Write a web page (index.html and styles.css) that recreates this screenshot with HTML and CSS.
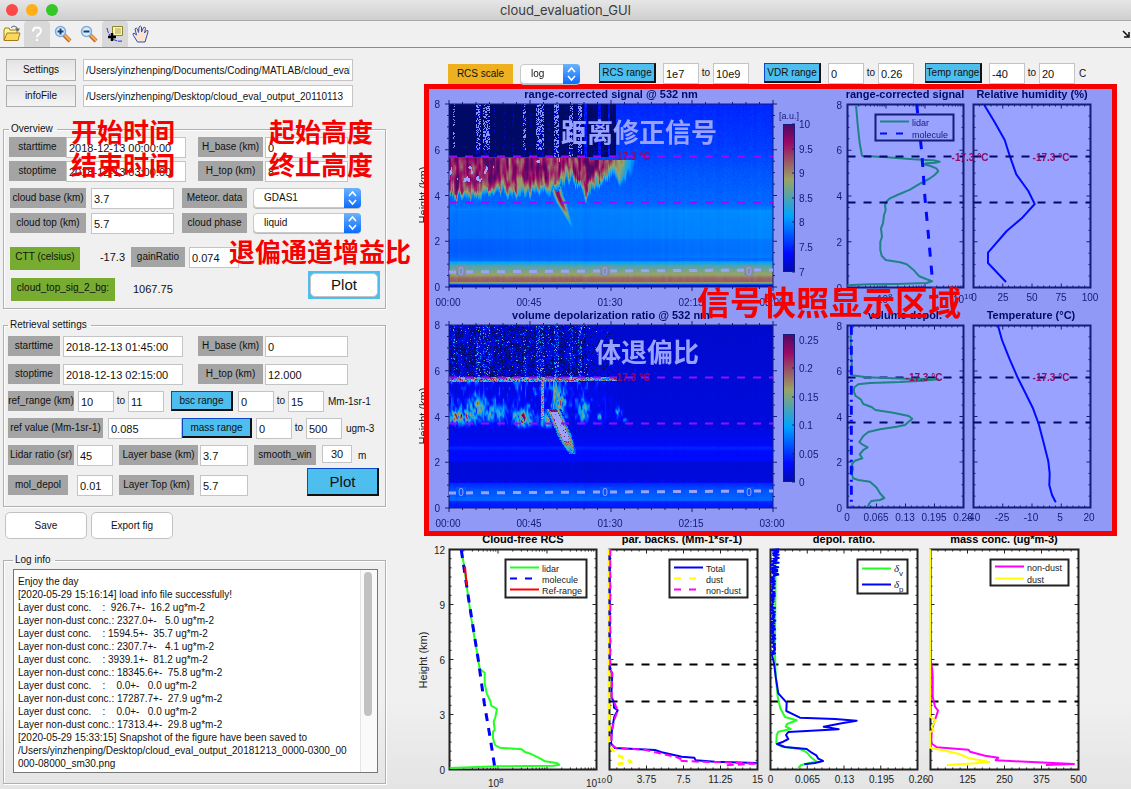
FILE: index.html
```html
<!DOCTYPE html>
<html lang="en">
<head>
<meta charset="utf-8">
<title>cloud_evaluation_GUI</title>
<link rel="stylesheet" href="styles.css">
</head>
<body>
<header class="titlebar">
  <div class="lights"><i class="light light-close"></i><i class="light light-min"></i><i class="light light-max"></i></div>
  <h1 class="window-title">cloud_evaluation_GUI</h1>
</header>
<nav class="toolbar" aria-label="Figure tools">
  <button class="tool" aria-label="Open"><svg width="20" height="20" viewBox="0 0 20 20"><path d="M2 16V6l1-2h4l1 2h7v3" fill="#fff2a0" stroke="#a67c10"/><path d="M2 16.500 5 9h13l-2 7.500z" fill="#f8d860" stroke="#a67c10"/><path d="M9 3.500q3-3 6 0v2.500" fill="none" stroke="#53657a"/><path d="M13 4.500h5l-2 3z" fill="#53657a"/></svg></button>
  <button class="tool tool-on" aria-label="Help"><svg width="20" height="20" viewBox="0 0 20 20"><path d="M6 7.500q0-4 4-4t4 3.500q0 2-2 3.200t-2 3" fill="none" stroke="#fff" stroke-width="2"/><path d="M9 15h2v2H9z" fill="#fff"/></svg></button>
  <button class="tool" aria-label="Zoom in"><svg width="20" height="20" viewBox="0 0 20 20"><path d="m11 11 6 6" stroke="#b9672c" stroke-width="4"/><path d="m11.500 11 5.500 5.500" stroke="#ffb347" stroke-width="2"/><circle cx="7.500" cy="7.500" r="5" fill="#d5f0fa" stroke="#86a7d8" stroke-width="1.500"/><path d="M4.500 7.500h6m-3-3v6" stroke="#0c3f80" stroke-width="2"/></svg></button>
  <button class="tool" aria-label="Zoom out"><svg width="20" height="20" viewBox="0 0 20 20"><path d="m11 11 6 6" stroke="#b9672c" stroke-width="4"/><path d="m11.500 11 5.500 5.500" stroke="#ffb347" stroke-width="2"/><circle cx="7.500" cy="7.500" r="5" fill="#d5f0fa" stroke="#86a7d8" stroke-width="1.500"/><path d="M4.500 7.500h6" stroke="#0c3f80" stroke-width="2"/></svg></button>
  <button class="tool tool-on" aria-label="Data cursor"><svg width="20" height="20" viewBox="0 0 20 20"><path d="M2 4q1 6 5 10t10 3" fill="none" stroke="#22f" stroke-dasharray="5 1"/><path d="M7.500 2.500h10v9h-10z" fill="#fbf7b0" stroke="#8a8430"/><path d="M10 5h6m-6 2h6m-6 2h6" stroke="#a9a45c"/><path d="M3 13h8m-4-4v8" stroke="#000" stroke-width="2.500"/></svg></button>
  <button class="tool" aria-label="Pan"><svg width="20" height="20" viewBox="0 0 20 20"><path d="M6.500 18 2.500 11.500q-1.500-2 .5-2.500l2.500 2L4 5q1-2 2.500 0l1 3.500L8 3q1.500-2 2.500 0v5l2-4.500q2-1 2 1L13.500 9l2-2.500q2-.5 1.500 1.500L14 18z" fill="#fde3cd" stroke="#2f4fb5" stroke-width="1"/></svg></button>
  <svg class="dock-arrow" width="8" height="8" viewBox="0 0 8 8"><path d="m1 1 5 5M7 2v5H2" stroke="#111" stroke-width="1.500" fill="none"/></svg>
</nav>

<main class="workspace">
  <section class="panel">
    <div class="files">
      <div class="row"><button class="btn-flat">Settings</button><input class="path" aria-label="Settings path" value="/Users/yinzhenping/Documents/Coding/MATLAB/cloud_eval"></div>
      <div class="row"><button class="btn-flat">infoFile</button><input class="path" aria-label="Info file path" value="/Users/yinzhenping/Desktop/cloud_eval_output_20110113"></div>
    </div>

    <fieldset class="group overview">
      <legend>Overview</legend>
      <div class="row"><label class="tag w-tag-m" for="o1">starttime</label><input class="w-date" id="o1" value="2018-12-13 00:00:00"><label class="tag w-tag-l gap-12" for="o2">H_base (km)</label><input class="w-num gap-s" id="o2" value="0"></div>
      <div class="row row-tight"><label class="tag w-tag-m" for="o3">stoptime</label><input class="w-date" id="o3" value="2018-12-13 03:00:00"><label class="tag w-tag-l gap-12" for="o4">H_top (km)</label><input class="w-num gap-s" id="o4" value="8"></div>
      <div class="row row-cloud"><label class="tag w-tag-xl" for="o5">cloud base (km)</label><input class="w-num gap-m" id="o5" value="3.7"><label class="tag w-tag-l gap-8" for="o6">Meteor. data</label><span class="select gap-6"><select id="o6"><option>GDAS1</option></select><svg class="steps" viewBox="0 0 17 20"><path d="m5 8 3.500-4L12 8M5 12l3.500 4L12 12"/></svg></span></div>
      <div class="row row-phase"><label class="tag w-tag-xl" for="o7">cloud top (km)</label><input class="w-num gap-m" id="o7" value="5.7"><label class="tag w-tag-l gap-8" for="o8">cloud phase</label><span class="select gap-6"><select id="o8"><option>liquid</option></select><svg class="steps" viewBox="0 0 17 20"><path d="m5 8 3.500-4L12 8M5 12l3.500 4L12 12"/></svg></span></div>
      <div class="row row-ctt"><span class="tag green w-70">CTT (celsius)</span><output class="out w-ctt">-17.3</output><label class="tag w-54 gap-6" for="o9">gainRatio</label><input class="w-50 gap-4" id="o9" value="0.074"></div>
      <div class="row row-sig"><span class="tag green w-sig">cloud_top_sig_2_bg:</span><output class="out">1067.75</output><span class="plot-well"><button class="btn-round plot">Plot</button></span></div>
      <span class="note note-a">开始时间</span><span class="note note-b">起始高度</span>
      <span class="note note-c">结束时间</span><span class="note note-d">终止高度</span>
      <span class="note note-e">退偏通道增益比</span>
    </fieldset>

    <fieldset class="group retrieval">
      <legend>Retrieval settings</legend>
      <div class="row row-r"><label class="tag w-52" for="r1">starttime</label><input class="w-date gap-3" id="r1" value="2018-12-13 01:45:00"><label class="tag w-tag-l gap-14" for="r2">H_base (km)</label><input class="w-num gap-s" id="r2" value="0"></div>
      <div class="row row-r"><label class="tag w-52" for="r3">stoptime</label><input class="w-date gap-3" id="r3" value="2018-12-13 02:15:00"><label class="tag w-tag-l gap-14" for="r4">H_top (km)</label><input class="w-num gap-s" id="r4" value="12.000"></div>
      <div class="row row-r"><label class="tag w-66" for="r5">ref_range (km)</label><input class="w-36 gap-4" id="r5" value="10"><label class="to" for="r6">to</label><input class="w-36" id="r6" value="11"><button class="btn-blue w-62 gap-7">bsc range</button><input class="w-36 gap-m" aria-label="bsc from" value="0"><label class="to" for="r7">to</label><input class="w-36" id="r7" value="15"><span class="unit">Mm-1sr-1</span></div>
      <div class="row row-r"><label class="tag w-95" for="r8">ref value (Mm-1sr-1)</label><input class="w-74 gap-m" id="r8" value="0.085"><button class="btn-blue w-70">mass range</button><input class="w-36 gap-4" aria-label="mass from" value="0"><label class="to" for="r9">to</label><input class="w-36" id="r9" value="500"><span class="unit">ugm-3</span></div>
      <div class="row row-layer"><label class="tag w-66" for="r10">Lidar ratio (sr)</label><input class="w-36 gap-3" id="r10" value="45"><label class="tag w-79 gap-6" for="r11">Layer base (km)</label><input class="w-48 gap-s" id="r11" value="3.7"><label class="tag w-62 gap-6" for="r12">smooth_win</label><input class="w-30 gap-6 center" id="r12" value="30"><span class="unit gap-s">m</span></div>
      <div class="row"><label class="tag w-60" for="r13">mol_depol</label><input class="w-36 gap-9" id="r13" value="0.01"><label class="tag w-75 gap-6" for="r14">Layer Top (km)</label><input class="w-48 gap-6" id="r14" value="5.7"><button class="btn-blue plot plot-blue">Plot</button></div>
    </fieldset>

    <div class="actions"><button class="btn-round">Save</button><button class="btn-round">Export fig</button></div>

    <fieldset class="group log">
      <legend>Log info</legend>
      <div class="log-box"><textarea class="log-text" aria-label="Log info" wrap="off" readonly>Enjoy the day
[2020-05-29 15:16:14] load info file successfully!
Layer dust conc.    :  926.7+-  16.2 ug*m-2
Layer non-dust conc.: 2327.0+-   5.0 ug*m-2
Layer dust conc.    : 1594.5+-  35.7 ug*m-2
Layer non-dust conc.: 2307.7+-   4.1 ug*m-2
Layer dust conc.    : 3939.1+-  81.2 ug*m-2
Layer non-dust conc.: 18345.6+-  75.8 ug*m-2
Layer dust conc.    :    0.0+-   0.0 ug*m-2
Layer non-dust conc.: 17287.7+-  27.9 ug*m-2
Layer dust conc.    :    0.0+-   0.0 ug*m-2
Layer non-dust conc.: 17313.4+-  29.8 ug*m-2
[2020-05-29 15:33:15] Snapshot of the figure have been saved to
/Users/yinzhenping/Desktop/cloud_eval_output_20181213_0000-0300_00
000-08000_sm30.png</textarea><div class="scroll"><i class="thumb"></i></div></div>
    </fieldset>
  </section>

  <section class="figures">
    <div class="controls">
      <label class="tag orange w-tag-l" for="c1">RCS scale</label><span class="select select-s gap-7"><select id="c1"><option>log</option></select><svg class="steps" viewBox="0 0 17 20"><path d="m5 8 3.500-4L12 8M5 12l3.500 4L12 12"/></svg></span>
      <button class="btn-blue w-57 gap-19">RCS range</button><input class="w-36 gap-7" aria-label="RCS from" value="1e7"><label class="to" for="c2">to</label><input class="w-36" id="c2" value="10e9">
      <button class="btn-blue w-57 gap-14">VDR range</button><input class="w-36 gap-7" aria-label="VDR from" value="0"><label class="to" for="c3">to</label><input class="w-36" id="c3" value="0.26">
      <button class="btn-blue w-57 gap-11">Temp range</button><input class="w-36 gap-7" aria-label="Temp from" value="-40"><label class="to" for="c4">to</label><input class="w-36" id="c4" value="20"><span class="unit">C</span>
    </div>
    <svg class="chart" id="snapshot" viewBox="418 84 713 452"></svg>
    <svg class="chart" id="retrieval" viewBox="418 536 713 253"></svg>
  </section>
</main>
<script src="plots.js"></script>
</body>
</html>
```

FILE: styles.css
```css
* { box-sizing: border-box; }
body { margin: 0; min-height: 100vh; display: flex; flex-direction: column; background: #f0f0f0; color: #111; font: 10px/12px "Liberation Sans", "Noto Sans CJK SC", sans-serif; overflow-x: hidden; }
button, input, select, textarea { font: inherit; color: inherit; margin: 0; }
button { padding: 0; white-space: nowrap; }

.titlebar { display: grid; grid-template-columns: 1fr auto 1fr; align-items: center; height: 21px; background: linear-gradient(#e6e6e6, #cfcfcf); border-bottom: 1px solid #a9a9a9; }
.lights { display: flex; gap: 8px; padding-left: 6px; }
.light { width: 12px; height: 12px; border-radius: 50%; }
.light-close { background: #fb4948; }
.light-min { background: #fdb016; }
.light-max { background: #35c62a; }
.window-title { margin: 0; font: 400 13px/20px Inter, sans-serif; color: #3c3c3c; }

.toolbar { display: flex; align-items: center; height: 27px; background: #f0f0f0; border-bottom: 1px solid #8c8c8c; }
.tool { display: grid; place-items: center; width: 26px; height: 26px; border: 0; background: none; border-radius: 4px 4px 0 0; }
.tool:first-child { width: 24px; }
.tool-on { background: #d8d8d8; }
.dock-arrow { margin-left: auto; margin-right: 1px; }

.workspace { display: grid; grid-template-columns: 418px 1fr; flex: 1; background: linear-gradient(#f0f0f0 88%, #e4e4e4); }
.panel { padding: 11px 32px 4px 3px; }
.row { display: flex; align-items: flex-start; }
.files { display: grid; gap: 4px; padding-left: 3px; margin-bottom: 16px; }
.files .row { gap: 7px; }

input { height: 21px; padding: 0 2px; border: 1px solid #c4c4c4; background: #fff; font-size: 11px; border-radius: 0; outline: 0; }
.path { width: 270px; height: 22px; font-size: 10px; }
.center { text-align: center; height: 18px; }
.btn-flat { width: 70px; height: 22px; border: 1px solid #adadad; background: linear-gradient(#e4e4e4, #f4f4f4); font-size: 10px; }

.group { position: relative; margin: 0; min-width: 0; border: 1px solid #b0b0b0; box-shadow: inset 1px 1px #fff, 1px 1px #fff; width: 383px; }
.group legend { padding: 0 4px 0 2px; margin: 0; font-size: 10px; line-height: 12px; }
.overview { height: 186px; padding: 2px 0 0 5px; }
.retrieval { height: 188px; margin-top: 10px; padding: 5px 0 0 4px; }
.log { height: 230px; margin-top: 15px; padding: 3px 0 0 9px; }

.tag { display: block; height: 20px; padding-top: 4px; line-height: 11px; text-align: center; background: #a4a4a4; white-space: nowrap; }
.green { background: #77ac30; height: 23px; }
.orange { background: #edb120; margin-top: 1px; }
.to { width: 14px; padding-top: 4px; text-align: center; }
.unit { padding: 5px 0 0 4px; }
.out { padding-top: 4px; font-size: 11px; }

.w-tag-m { width: 57px; } .w-tag-l { width: 65px; } .w-tag-xl { width: 76px; }
.w-date { width: 120px; } .w-num { width: 83px; }
.w-30 { width: 30px; } .w-36 { width: 36px; } .w-48 { width: 48px; } .w-50 { width: 50px; } .w-52 { width: 52px; }
.w-54 { width: 54px; } .w-57 { width: 57px; } .w-60 { width: 60px; } .w-62 { width: 62px; } .w-66 { width: 66px; }
.w-70 { width: 70px; } .w-74 { width: 74px; } .w-75 { width: 75px; } .w-79 { width: 79px; } .w-95 { width: 95px; }
.w-sig { width: 104px; } .w-ctt { width: 45px; text-align: right; }
.gap-s { margin-left: 2px; } .gap-3 { margin-left: 3px; } .gap-4 { margin-left: 4px; } .gap-m { margin-left: 5px; } .gap-6 { margin-left: 6px; }
.gap-7 { margin-left: 7px; } .gap-8 { margin-left: 8px; } .gap-9 { margin-left: 9px; } .gap-12 { margin-left: 12px; }
.gap-11 { margin-left: 11px; } .gap-14 { margin-left: 15px; } .gap-19 { margin-left: 19px; }

.row-tight { margin-top: 3px; }
.row-cloud { margin: 6px 0 4px 1px; }
.row-phase { margin-left: 1px; }
.row-ctt { margin: 13px 0 8px 1px; }
.row-sig { margin-left: 2px; }
.row-sig .out { margin: 1px 0 0 18px; }
.row-r { margin-bottom: 6px; }
.row-layer { margin-bottom: 9px; }
.retrieval .row-r:nth-of-type(1) { margin-bottom: 7px; }

.select { position: relative; display: block; width: 108px; height: 21px; }
.select select { appearance: none; width: 100%; height: 20px; padding: 1px 10px; border: 1px solid #c9c9c9; border-radius: 4px; background: #fff; font-size: 10px; box-shadow: 0 1px 0 #bbb; }
.steps { position: absolute; right: 0; top: 0; width: 17px; height: 20px; border-radius: 0 4px 4px 0; background: linear-gradient(#6db3fb, #0a6cff); pointer-events: none; fill: none; stroke: #fff; stroke-width: 1.5; }
.select-s { width: 60px; margin-top: 1px; }

.btn-blue { height: 20px; background: #4dbeee; border: solid; border-width: 1px 2px 2px 1px; border-color: #0a48c8 #111 #111 #0a48c8; font-size: 10px; }
.btn-round { width: 82px; height: 27px; border: 1px solid #c2c2c2; border-radius: 5px; background: #fff; font-size: 10px; }
.plot { font-size: 15px; }
.plot-well { display: grid; width: 72px; height: 28px; margin: -7px 5px 0 auto; padding: 2px; background: #4dbeee; }
.plot-well .plot { width: 100%; height: 24px; font-size: 15px; }
.plot-blue { width: 72px; height: 28px; margin: -7px 6px 0 auto; font-size: 15px; }
.actions { display: flex; gap: 4px; padding: 5px 0 0 2px; }

.note { position: absolute; color: #f60000; font: 700 26px/30px "Noto Sans CJK SC", sans-serif; white-space: nowrap; pointer-events: none; }
.note-a { left: 67px; top: -19px; } .note-b { left: 265px; top: -19px; }
.note-c { left: 67px; top: 14px; } .note-d { left: 265px; top: 14px; }
.note-e { left: 225px; top: 101px; }

.log-box { display: flex; width: 365px; height: 204px; border: 1px solid #777; background: #fff; }
.log-text { flex: 1; min-width: 0; padding: 5px 4px 0; border: 0; background: none; resize: none; overflow: hidden; font-size: 10px; line-height: 13px; white-space: pre; outline: 0; }
.scroll { width: 17px; padding: 2px 3px; border-left: 1px solid #e4e4e4; background: #fafafa; }
.thumb { display: block; width: 8px; height: 144px; border-radius: 4px; background: #c2c2c2; }

.figures { min-width: 0; }
.controls { display: flex; align-items: flex-start; height: 36px; padding: 15px 0 0 30px; }
.chart { display: block; width: 100%; height: auto; font: 10px "Liberation Sans", sans-serif; fill: #222; }
.chart .title { font-weight: 700; font-size: 11px; fill: #000; }
.chart .ylabel { font-size: 11px; }
.chart .key { font-size: 9px; }
.chart .sup { font-size: 8px; }
.chart .temp { font-weight: 700; fill: #f00000; }
.chart .delta { font: italic 11px "Liberation Serif", serif; }
.chart .zero { fill: #fff; }
.chart .caption { font: 700 26px "Noto Sans CJK SC", sans-serif; fill: #fff; }
.chart .banner { font: 700 33px "Noto Sans CJK SC", sans-serif; fill: #f60000; }
.heat { display: block; width: 324px; height: 183px; }
```

FILE: plots.js
```js
const NS = 'http://www.w3.org/2000/svg';
const snap = document.getElementById('snapshot');
const retr = document.getElementById('retrieval');

let seed = 7;
const rnd = () => { seed = (seed * 1664525 + 1013904223) % 4294967296; return seed / 4294967296; };

function el(parent, name, attrs, text) {
  const n = document.createElementNS(NS, name);
  for (const k in attrs) n.setAttribute(k, attrs[k]);
  if (text !== undefined) n.textContent = text;
  parent.appendChild(n);
  return n;
}
const txt = (p, x, y, s, anchor = 'middle', cls = '') => el(p, 'text', { x, y, 'text-anchor': anchor, class: cls }, s);
const line = (p, x1, y1, x2, y2, stroke = '#222', w = 1, dash = '') =>
  el(p, 'line', { x1, y1, x2, y2, stroke, 'stroke-width': w, 'stroke-dasharray': dash });

/* Traces are stored in thirds of a pixel relative to an origin. */
function trace(p, ox, oy, data, stroke, w = 2, dash = '') {
  const n = data.trim().split(/\s+/).map(s => s.split(',').map(Number));
  el(p, 'polyline', { points: n.map(([a, b]) => (ox + a / 3).toFixed(1) + ',' + (oy + b / 3).toFixed(1)).join(' '),
    fill: 'none', stroke, 'stroke-width': w, 'stroke-dasharray': dash, 'stroke-linejoin': 'round' });
}

/* Axes box with ticks; dir 1 = inward, -1 = outward. */
function ticks(p, b, nx, mx, ny, my, dir) {
  const [x, y, w, h] = b;
  const X = (i, n, l) => { const a = x + w * i / n; line(p, a, y, a, y + l * dir); line(p, a, y + h, a, y + h - l * dir); };
  const Y = (i, n, l) => { const a = y + h * i / n; line(p, x, a, x + l * dir, a); line(p, x + w, a, x + w - l * dir, a); };
  for (let i = 0; i <= nx * mx; i++) if (mx > 1) X(i, nx * mx, i % mx ? 2 : 4);
  for (let i = 0; i <= nx && mx === 1; i++) X(i, nx, 4);
  for (let i = 0; i <= ny * my; i++) Y(i, ny * my, i % my ? 2 : 4);
}
function logTicks(p, b, starts, decade) {
  const [x, y, w, h] = b;
  for (const s of starts) for (let k = 1; k < 10; k++) {
    const a = s + Math.log10(k) * decade;
    if (a > x && a < x + w) { line(p, a, y, a, y + (k === 1 ? 4 : 2)); line(p, a, y + h, a, y + h - (k === 1 ? 4 : 2)); }
  }
}
const box = (p, b, fill = '#fff', w = 2) => el(p, 'rect', { x: b[0], y: b[1], width: b[2], height: b[3], fill, stroke: '#222', 'stroke-width': w });

function ylabels(p, x, b, max, step) {
  for (let v = 0; v <= max; v += step) txt(p, x, b[1] + b[3] * (1 - v / max) + 4, v, 'end');
}
function vtext(p, x, y) {
  el(p, 'text', { x, y, 'text-anchor': 'middle', class: 'ylabel', transform: `rotate(-90 ${x} ${y})` }, 'Height (km)');
}
function power(p, x, y, e) {
  txt(p, x, y, '10', 'end');
  txt(p, x, y - 4, e, 'start', 'sup');
}

/* Jet colour map, t in 0..1 */
function jet(t) {
  t = Math.max(0, Math.min(1, t));
  const c = k => Math.max(0, Math.min(1, 1.5 - Math.abs(4 * t - k))) * 255;
  return [c(3), c(2), c(1)];
}
function lerp(pts, x) {
  for (let i = 1; i < pts.length; i++) if (x <= pts[i][0]) {
    const [a, b] = [pts[i - 1], pts[i]];
    return a[1] + (b[1] - a[1]) * (x - a[0]) / (b[0] - a[0]);
  }
  return pts[pts.length - 1][1];
}
const colNoise = Array.from({ length: 324 }, () => rnd());
const smooth = colNoise.map((_, i) => (colNoise[i] + colNoise[Math.max(0, i - 1)] + colNoise[Math.min(323, i + 1)]) / 3);
const blobs = Array.from({ length: 200 * 200 }, () => rnd());
const blob = (x, y) => {
  const xi = Math.floor(x), yi = Math.floor(y), fx = x - xi, fy = y - yi, g = (i, j) => blobs[((j % 200) * 200 + i % 200)];
  return (g(xi, yi) * (1 - fx) + g(xi + 1, yi) * fx) * (1 - fy) + (g(xi, yi + 1) * (1 - fx) + g(xi + 1, yi + 1) * fx) * fy;
};
const streaks = [[4, 5, .3], [27, 31, .35], [34, 40, .42], [74, 76, .35], [87, 94, .42], [105, 109, .5], [120, 123, .3], [129, 132, .5]];
const streakAt = x => { const s = streaks.find(s => x >= s[0] && x <= s[1]); return s ? s[2] : 0; };

function rcs(x, h) {
  if (h > 5.72 && x < 167) {
    const s = streakAt(x);
    if (s && (h > 6 || x > 100) && rnd() < s) return [225, 232, 255];
    if (s && x > 25 && rnd() < .4) return jet(.05);
    if ([135, 136, 137, 149, 150, 151, 159, 160].includes(x)) return jet(.08 + rnd() * .1);
    if (x > 42 && rnd() < .25 && x % 9 < 2) return [0, 0, 130];
    return [0, 0, 0];
  }
  let t = lerp([[1.15, .29], [1.6, .27], [2.1, .28], [2.15, .3], [3.2, .31], [3.4, .32], [3.6, .28], [5, .25], [6, .21], [8, .17]], h);
  if (h > 1.3 && h < 3.4) t += (x - 110) / 324 * .04;
  t += (smooth[x] - .5) * .02 + (rnd() - .5) * (h > 3.5 ? .025 : .006);

  const low = lerp([[0, 3.9], [15, 3.75], [35, 4], [55, 4.1], [68, 3.8], [85, 4.1], [103, 4.1], [120, 4.5], [136, 4], [150, 4.4], [165, 4.9], [172, 4.3], [178, 4.8], [188, 5.3]], x) + (smooth[x] - .5) * .8;
  if (x < 190 && h < (x > 140 ? 5.58 : 5.68) && h > low) {
    const d = Math.min((h - low) / .8, 1), e = Math.min(1, (190 - x) / 35);
    const v = blob(x / 2, h * 1.6 + x / 9), u = blob(x / 3 + 50, h * 4);
    if (x < 45 && h < 5.3 && h > 4.6 && blob(x / 2.5 + 8, h * 4) > .7) return [255, 255, 255];
    if (x > 82 && x < 135 && h > 4.8 && blob(x / 2.5 + 8, h * 4) > .84) return [255, 255, 255];
    const core = .38 + d * .36 + v * .34 + (u - .5) * .22 - (x > 45 ? .06 : 0);
    return jet(Math.max(t, t + (core - t) * e * Math.min(1, d * 2.5)));
  }
  const cx = lerp([[2.6, 123], [3.2, 117], [4, 109], [4.8, 104]], h), dx = Math.abs(x - cx);
  if (h < 4.8 && h > 2.6 && dx < 6) {
    const peak = lerp([[2.6, .3], [2.9, .42], [3.2, .6], [3.7, .88], [4.8, .92]], h);
    return jet(Math.max(t, peak - Math.max(0, dx - 1) * .14));
  }
  if (h < 1.15) return jet(lerp([[0, .05], [.1, .02], [.14, .3], [.2, .5], [.24, .74], [.4, .72], [.55, .63], [.95, .5], [1.05, .42], [1.15, .34]], h) + (smooth[x] - .5) * .03);
  return jet(t);
}
function vdr(x, h) {
  if (h > 5.75 && x < 165) {
    const s = streakAt(x), r = rnd(), fade = x > 138 ? .3 : 1;
    if (r < (.05 + s * .6) * fade) return rnd() < .1 ? [255, 255, 255] : jet(.15 + rnd() * rnd() * .6);
    if (r < .6 * fade && blob(x / 3, h * 3) > .35) return [0, 0, 20];
    return jet(.03 + rnd() * .06);
  }
  if (x < 168 && h < 5.74 && h > (x < 130 ? 5.52 : 5.56)) return rnd() < .2 ? [255, 255, 255] : jet((x > 140 ? .2 : .35) + rnd() * .6);
  const base = lerp([[0, .14], [.3, .17], [.36, .28], [.8, .24], [1.1, .17], [1.16, .07], [2, .06], [2.1, .12], [2.5, .12], [2.65, .17], [2.78, .11], [3.6, .07], [8, .045]], h) + (rnd() - .5) * .008 + (smooth[x] - .5) * .012;
  const cx = 105 + (4.2 - h) * 10, dx = Math.abs(x - cx);
  if (h < 4.35 && h > 2.4 && dx < 8) {
    if (dx < 3.5 && h > 2.95 && h < 4.2 && rnd() < .93) return [255, 255, 255];
    return jet(Math.max(base, lerp([[2.4, .3], [3, .8], [4.3, .9]], h) - Math.max(0, dx - 3) * .16 + (rnd() - .5) * .25));
  }
  if (x > 91 && x < 95 && h > 3.9 && h < 5.6) return rnd() < .3 ? [255, 255, 255] : jet(.35 + rnd() * .5);
  if (x > 103 && x < 108 && h > 4.2 && h < 5.6) return jet(.25 + blob(x, h * 8) * .4);
  let p = 0;
  for (const [bx, bh, w, g, a] of [[12, 4, 15, .3, 1], [28, 4.4, 8, .5, .7], [40, 4.2, 6, .4, .5], [52, 4.2, 6, .4, .4], [73, 3.95, 8, .35, 1], [110, 4.7, 6, .6, .8], [134, 4.3, 5, .4, .65], [150, 4.05, 2, .15, .9], [169, 4.2, 3, .25, .6], [176, 3.85, 2, .1, .5], [98, 3.8, 8, .3, .6]])
    p = Math.max(p, a * Math.exp(-(((x - bx) / w) ** 2) - ((h - bh) / g) ** 2));
  const env = Math.max(0, Math.min(1, (h - 3.4) * 1.5, (175 - x) / 50));
  const fine = blob(x / 1.5, h * 7 + x / 5);
  return jet(base + (h > 3.3 && h < 5.55 ? p * fine * 1.15 * Math.min(1, (h - 3.3) * 3) + Math.pow(blob(x / 2 + 30, h * 4), 3) * .3 * env : 0));
}
function heat(b, fn) {
  const fo = el(snap, 'foreignObject', { x: b[0], y: b[1], width: b[2], height: b[3] });
  const c = document.createElement('canvas');
  c.className = 'heat'; c.width = 324; c.height = 183;
  fo.appendChild(c);
  const g = c.getContext('2d'), im = g.createImageData(324, 183);
  for (let y = 0; y < 183; y++) for (let x = 0; x < 324; x++) {
    const k = fn(x, (183 - y) / 183 * 8), o = (y * 324 + x) * 4;
    im.data[o] = k[0]; im.data[o + 1] = k[1]; im.data[o + 2] = k[2]; im.data[o + 3] = 255;
  }
  g.putImageData(im, 0, 0);
}

/* Snapshot figure */
el(snap, 'rect', { x: 427, y: 87, width: 687, height: 447, fill: '#f0f0f0' });
const defs = el(snap, 'defs', {});
const grad = el(defs, 'linearGradient', { id: 'jet', x1: 0, y1: 1, x2: 0, y2: 0 });
for (let i = 0; i <= 16; i++) el(grad, 'stop', { offset: i / 16, 'stop-color': `rgb(${jet(i / 16).map(Math.round)})` });

for (const [y, fn, title, tx, lab] of [[104, rcs, 'range-corrected signal @ 532 nm', 611, 195], [325, vdr, 'volume depolarization ratio @ 532 nm', 611, 416]]) {
  const b = [449, y, 324, 183];
  heat(b, fn);
  box(snap, b, 'none', 1);
  ticks(snap, b, 4, 6, 4, 4, -1);
  ylabels(snap, 440, b, 8, 2);
  ['00:00', '00:45', '01:30', '02:15', '03:00'].forEach((s, i) => txt(snap, 448 + 81 * i, y + 202, s));
  txt(snap, tx, y - 6, title, 'middle', 'title');
  vtext(snap, 427, lab);
  line(snap, 449, y + 52.5, 773, y + 52.5, '#f0f', 2, '8 8');
  line(snap, 449, y + 98.5, 773, y + 98.5, '#f0f', 2, '8 8');
  line(snap, 449, y + 168, 773, y + 166, '#fff', 3, '8 8');
  for (const x of [461, 605, 749]) {
    el(snap, 'rect', { x: x - 5, y: y + 162, width: 10, height: 10, fill: y < 200 ? '#d4e060' : '#0077ff' });
    txt(snap, x, y + 171, '0', 'middle', 'zero');
  }
  txt(snap, 632, y + 56, '-17.3 °C', 'middle', 'temp');
}
txt(snap, 639, 142, '距离修正信号', 'middle', 'caption');
txt(snap, 647, 362, '体退偏比', 'middle', 'caption');
for (const [y, labels] of [[124, [['10', 0], ['9.5', 25], ['9', 49], ['8.5', 74], ['8', 98], ['7.5', 123], ['7', 148]]], [334, [['0.25', 6], ['0.2', 34], ['0.15', 63], ['0.1', 91], ['0.05', 120], ['0', 148]]]]) {
  el(snap, 'rect', { x: 783.5, y: y + .5, width: 11, height: 147, fill: 'url(#jet)', stroke: '#222' });
  for (const [s, d] of labels) { txt(snap, 799, y + d + 4, s, 'start'); line(snap, 792, y + d, 795, y + d); }
}
txt(snap, 779, 119, '[a.u.]', 'start', 'key');

const P1 = [847.5, 104.5, 116, 183], P2 = [973.5, 104.5, 117, 183], P3 = [847.5, 325.5, 116, 182], P4 = [973.5, 325.5, 117, 182];
for (const b of [P1, P2, P3, P4]) box(snap, b);
ticks(snap, P1, 1, 1, 4, 4, 1);
logTicks(snap, P1, [808, 847, 886, 925], 39);
ticks(snap, P2, 4, 5, 4, 4, 1);
ticks(snap, P3, 4, 5, 4, 4, 1);
ticks(snap, P4, 4, 5, 4, 4, 1);
ylabels(snap, 842, P1, 8, 2);
ylabels(snap, 842, P3, 8, 2);
txt(snap, 905, 98, 'range-corrected signal', 'middle', 'title');
txt(snap, 1032, 98, 'Relative humidity (%)', 'middle', 'title');
txt(snap, 905, 319, 'volume depol.', 'middle', 'title');
txt(snap, 1031, 319, 'Temperature (°C)', 'middle', 'title');
trace(snap, 780, 55, '228,150 233,210 239,265 246,302 320,307 400,313 460,316 479,320 466,323 440,325 432,328 452,333 470,341 475,349 463,361 450,370 420,386 390,404 352,420 330,430 320,439 315,450 317,465 312,480 309,505 303,520 306,545 301,560 301,585 305,602 317,615 360,622 380,628 400,644 418,664 440,673 456,679 440,684 350,687 270,688 215,690 202,692', '#35c832');
trace(snap, 780, 55, '410,148 425,290 435,430 447,560 458,685', '#00f', 3, '9 9');
trace(snap, 780, 55, '613,150 645,203 674,255 690,305 709,358 745,408 764,447 725,490 680,528 624,593 624,624 678,681', '#00f');
for (const [b, y] of [[P1, 156.5], [P1, 202.5], [P2, 156.5], [P2, 202.5], [P3, 377.5], [P3, 422.5], [P4, 377.5], [P4, 422.5]])
  line(snap, b[0], y, b[0] + b[2], y, '#000', 2, '8 8');
trace(snap, 780, 300, '214,77 212,120 215,190 214,226 260,232 380,236 475,238 430,242 360,246 270,249 235,253 223,262 221,275 227,288 242,298 250,312 276,322 286,330 340,338 386,348 397,356 386,365 375,375 350,380 300,388 265,396 250,408 238,426 248,434 263,442 250,450 239,463 247,475 225,482 216,492 219,508 215,520 219,535 235,540 270,545 290,563 300,580 313,594 300,600 274,603 267,612 264,619', '#35c832');
trace(snap, 780, 300, '214,77 214,619', '#00f', 3, '9 5 2 4');
trace(snap, 780, 300, '654,77 666,120 688,175 714,235 735,277 758,323 776,372 791,429 805,484 809,520 808,556 816,585 827,607', '#00f');
for (const [x, y] of [[970, 161], [1051, 161], [924, 381], [1051, 381]]) txt(snap, x, y, '-17.3 °C', 'middle', 'temp');
['0', '25', '50', '75', '100'].forEach((s, i) => txt(snap, 974 + 29 * i, 301, s));
['0', '0.065', '0.13', '0.195', '0.26'].forEach((s, i) => txt(snap, 847 + 29 * i, 521, s));
['-40', '-25', '-10', '5', '20'].forEach((s, i) => txt(snap, 973 + 29 * i, 521, s));
power(snap, 888, 303, '8');
power(snap, 964, 303, '10');

function legend(p, b, items, x1, x2, tx, y0, dy) {
  box(p, b);
  items.forEach(([s, c, dash], i) => {
    const y = y0 + i * dy;
    line(p, x1, y, x2, y, c, 2, dash || '');
    if (s.length === 2 && s[0] === 'δ') { txt(p, tx, y + 3, 'δ', 'start', 'delta'); txt(p, tx + 5, y + 7, s[1], 'start', 'sup'); }
    else txt(p, tx, y + 4, s, 'start', 'key');
  });
}
legend(snap, [875.5, 114.5, 78, 26], [['lidar', '#35c832'], ['molecule', '#00f', '7 9']], 880, 909, 912, 121.5, 12);

/* Blue highlight and its red frame */
el(snap, 'rect', { x: 427, y: 87, width: 687, height: 447, fill: 'rgba(0,25,255,.4)' });
el(snap, 'rect', { x: 426.5, y: 86.5, width: 688, height: 447, fill: 'none', stroke: '#f60000', 'stroke-width': 5 });
txt(snap, 829, 315, '信号快照显示区域', 'middle', 'banner');

/* Retrieval figure */
const R = [[449.5, 549.5, 147, 220], [609.5, 549.5, 148, 220], [770.5, 549.5, 147, 220], [930.5, 549.5, 148, 220]];
for (const b of R) box(retr, b);
ticks(retr, R[0], 1, 1, 4, 6, 1);
logTicks(retr, R[0], [399, 449, 498, 547], 49);
for (const b of R.slice(1)) ticks(retr, b, 4, 5, 4, 6, 1);
ylabels(retr, 445, R[0], 12, 3);
vtext(retr, 427, 660);
txt(retr, 523, 543, 'Cloud-free RCS', 'middle', 'title');
txt(retr, 682, 543, 'par. backs. (Mm-1*sr-1)', 'middle', 'title');
txt(retr, 844, 543, 'depol. ratio.', 'middle', 'title');
txt(retr, 1004, 543, 'mass conc. (ug*m-3)', 'middle', 'title');
trace(retr, 415, 530, '139,60 148,110 158,190 172,285 188,380 194,417 209,428 209,460 215,490 226,513 229,527 246,537 241,562 236,575 239,600 234,605 234,625 240,645 254,653 320,658 330,666 346,671 375,685 390,694 425,699 433,704 415,707 250,709 104,714', '#2f2');
trace(retr, 415, 530, '139,60 163,220 190,390 208,520 225,620 240,716', '#00f', 3, '8 7');
trace(retr, 415, 530, '150,110 155,166', '#f00', 2);
for (const b of R.slice(1)) for (const y of [664.5, 701.5]) line(retr, b[0], y, b[0] + b[2], y, '#000', 2, '8 8');
trace(retr, 415, 530, '584,58 584,390 586,420 592,430 589,500 596,515 597,533 608,541 598,560 591,600 588,640 600,654 720,660 740,667 800,680 838,683 842,691 900,695 1025,699', '#00f');
trace(retr, 415, 530, '582,58 582,630 590,655 606,675 635,688 648,695 625,700 601,704', '#ff0', 3, '6 5');
trace(retr, 415, 530, '586,58 586,420 591,430 590,500 608,541 598,570 589,610 590,645 605,655 690,659 720,667 780,680 797,686 790,692 850,695 925,697 1025,701 930,706', '#f0f', 2, '7 4');
let d = '';
for (let y = 58; y < 375; y += 2) d += `${(y < 135 ? 48 + rnd() * 26 : 48 + rnd() * 13).toFixed(0)},${y} `;
trace(retr, 755, 530, '62,60 60,370 62,440 68,500 76,535 90,561 125,571 96,582 92,590 107,597 70,605 65,615 64,640 80,650 135,657 155,667 166,680 185,695 160,700 137,706 130,714', '#2f2');
trace(retr, 755, 530, d + '57,400 62,440 70,490 95,518 94,543 115,553 135,563 240,567 305,572 260,580 206,590 251,598 100,606 93,615 100,627 85,635 66,642 90,651 155,657 170,668 184,676 190,686 204,693 180,699 148,703', '#00f');
trace(retr, 755, 530, '526,58 527,390 532,420 533,440 533,500 540,530 549,542 540,570 530,600 529,640 545,652 640,659 645,665 690,677 730,683 722,691 780,694 957,702 873,705', '#f0f');
trace(retr, 755, 530, '525,58 525,560 542,571 530,590 536,603 525,605 525,653 570,662 610,671 640,684 703,696 660,700 576,705', '#ff0');
power(retr, 499, 787, '8');
power(retr, 597, 787, '10');
[['0', '3.75', '7.5', '11.25', '15'], ['0', '0.065', '0.13', '0.195', '0.26'], ['0', '125', '250', '375', '500']].forEach((a, j) =>
  a.forEach((s, i) => txt(retr, R[j + 1][0] + 37 * i, 783, s)));
legend(retr, [505.5, 559.5, 81, 38], [['lidar', '#2f2'], ['molecule', '#00f', '7 8'], ['Ref-range', '#f00']], 510, 539, 542, 567.5, 11);
legend(retr, [669.5, 559.5, 78, 38], [['Total', '#00f'], ['dust', '#ff0', '7 8'], ['non-dust', '#f0f', '7 8']], 674, 703, 706, 567.5, 11);
legend(retr, [857.5, 559.5, 50, 34], [['δv', '#2f2'], ['δp', '#00f']], 862, 891, 894, 568.5, 16);
legend(retr, [990.5, 559.5, 78, 26], [['non-dust', '#f0f'], ['dust', '#ff0']], 995, 1024, 1027, 566.5, 12);
```
